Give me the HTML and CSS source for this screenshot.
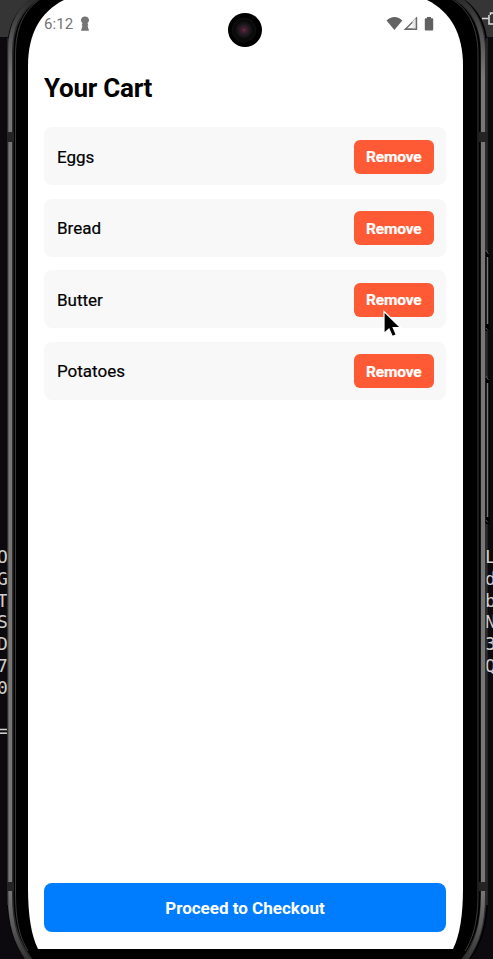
FILE: index.html
```html
<!DOCTYPE html>
<html lang="en">
<head>
<meta charset="utf-8">
<title>Your Cart</title>
<link rel="stylesheet" href="styles.css">
</head>
<body>
<div class="desktop">
  <div class="desktop-bar"></div>
  <pre class="terminal terminal-left">O
G
T
S
D
7
0

=</pre>
  <pre class="terminal terminal-right">L
d
b
N
3
Q</pre>
  <svg class="device" width="493" height="959" viewBox="0 0 493 959" fill="none">
    <defs>
      <linearGradient id="metal" gradientUnits="userSpaceOnUse" x1="0" y1="0" x2="0" y2="959">
        <stop offset="0" stop-color="#2c2c2c"/><stop offset=".04" stop-color="#555"/><stop offset=".08" stop-color="#767776"/>
        <stop offset=".93" stop-color="#767776"/><stop offset=".97" stop-color="#555"/><stop offset="1" stop-color="#333"/>
      </linearGradient>
    </defs>
    <path d="M482 18.500h7M489 15v9h6M490.500 15v-2h4" stroke="#ddd" stroke-width="1.500"/>
    <path d="M30 0C15 11 7 27 7 52V895C7 925 13 944 26 959H470C482 944 488 925 488 895V52C488 27 480 11 465 0Z" fill="#000"/>
    <g stroke="#2b2b2b" stroke-width="6">
      <path d="M36-2C18 10 10.500 28 10.500 52V895C10.500 925 17 944 31 962"/>
      <path d="M457-2C475 10 483.500 28 483.500 52V895C483.500 925 477 944 463 962"/>
    </g>
    <g stroke="url(#metal)" stroke-width="4">
      <path d="M35-2C17 10 10 28 10 52V895C10 925 16 944 30 962"/>
      <path d="M458-2C475 10 483 28 483 52V895C483 925 477 944 464 962"/>
    </g>
    <path d="M8 38V905M487 38V905" stroke="#444"/>
    <g stroke="#3a3a3a">
      <path d="M42-2C23 10 15.500 29 15.500 55V892C15.500 920 19 936 28 951"/>
      <path d="M450-2C470 10 478 29 478 55V892C478 920 474 936 465 951"/>
    </g>
    <path d="M7 132h7v10H7zM479 132h8v10h-8zM7 882h7v9H7zM479 882h8v9h-8z" fill="#242424"/>
    <g stroke="#000" stroke-width="4"><path d="M487.500 252v79M487.500 378v146"/></g>
    <g stroke="#757575" stroke-width="1.500"><path d="M487.500 257v67M487.500 383v134"/></g>
    <path d="M486 250l2.500 4M486 328l2 2.500M486 376l2.500 4M486 520l2 2.500" stroke="#555"/>
    <path d="M64 0C40 12 28 34 28 66V888C28 914 31 935 38 949H453C460 935 463 914 463 888V66C463 34 451 12 427 0Z" fill="#fff"/>
  </svg>
  <main class="screen">
    <header class="status">
      <span class="time">6:12</span>
      <svg class="keyhole" width="10" height="16" viewBox="0 0 10 16"><path d="M5 .500C2.600.500 1 2.100 1 4c0 1.400.700 2.300 1.500 3L1.600 9.500h.900L1 14.800h8L7.500 9.500h.900L7.500 7C8.300 6.300 9 5.400 9 4 9 2.100 7.400.500 5 .500Z" fill="#757575"/></svg>
      <svg class="signals" width="48" height="16" viewBox="0 0 48 16">
        <path d="M.500 4.500C5-.200 12-.200 16.300 4.500L8.400 14Z" fill="#636363"/>
        <path d="M30.400 2.300V13.300H19.300Z" fill="none" stroke="#686868" stroke-width="1.400"/><path d="M26.500 5.500l4-4V14H26.500Z" fill="#e6e6e6"/><path d="M30.400 1.500V13.300H19" fill="none" stroke="#686868" stroke-width="1.400"/>
        <path d="M41 1h4v1.200h1.300q.900 0 .900.900v10.500q0 .900-.900.900h-6.600q-.900 0-.900-.900V3.100q0-.900.900-.900H41Z" fill="#606060"/>
      </svg>
    </header>
    <h1>Your Cart</h1>
    <ul class="items">
      <li class="item"><span>Eggs</span><button class="remove">Remove</button></li>
      <li class="item"><span>Bread</span><button class="remove">Remove</button></li>
      <li class="item"><span>Butter</span><button class="remove">Remove</button></li>
      <li class="item"><span>Potatoes</span><button class="remove">Remove</button></li>
    </ul>
    <button class="checkout">Proceed to Checkout</button>
  </main>
  <div class="camera"></div>
  <svg class="pointer" width="20" height="30" viewBox="0 0 20 30"><path d="M2 1.500V23.500L7 19 10.300 26.500 14.300 24.700 11.200 17.500H18.500Z" fill="#000" stroke="#fff" stroke-width="1.200"/></svg>
</div>
</body>
</html>
```

FILE: styles.css
```css
* { box-sizing: border-box; }
body { margin: 0; font-family: Roboto, sans-serif; color: #000; }
.desktop { position: relative; width: 493px; height: 959px; overflow: hidden; background: #0c0a0e; }
.desktop-bar { height: 37px; background: #353535; }
.terminal { position: absolute; top: 546px; margin: 0; color: #cfcfcf; font: 18px/21.8px "DejaVu Sans Mono", monospace; }
.terminal-left { left: -3px; }
.terminal-right { left: 485px; z-index: 1; clip-path: inset(0 0 0 1.5px); }
.device { position: absolute; inset: 0; }
.screen { position: absolute; top: 0; left: 28px; width: 435px; height: 949px; padding: 0 17px 17px 16px; display: flex; flex-direction: column; }
.status { display: flex; align-items: center; height: 47px; }
.time { width: 36px; font-size: 15px; color: #757575; letter-spacing: .1px; }
.signals { margin-left: auto; margin-right: 12px; }
h1 { margin: 24px 0 0; font-size: 26px; line-height: 34px; font-weight: 700; letter-spacing: -.25px; }
.items { margin: 22px 0 0; padding: 0; list-style: none; display: grid; gap: 13.500px; }
.item { display: flex; align-items: center; justify-content: space-between; height: 58px; padding: 1px 12px 0 13px; border-radius: 8px; background: #f8f8f8; font-size: 17px; -webkit-text-stroke: .2px; }
button { border: 0; padding: 0; font-family: inherit; color: #fff; font-weight: 700; }
.remove { width: 80.500px; height: 34px; border-radius: 6px; background: #ff5a36; font-size: 15.500px; padding-top: 1px; letter-spacing: -.15px; }
.checkout { flex: none; height: 49px; margin-top: auto; border-radius: 8px; background: #007dff; font-size: 17px; }
.camera { position: absolute; left: 228px; top: 13px; width: 34px; height: 34px; border-radius: 50%; background: radial-gradient(circle at 47% 50%, #7a2c48 0, #482034 7%, #271c26 18%, #101010 32%, #080808 36%, #0e0e0e 47%, #000 52%); }
.pointer { position: absolute; left: 382px; top: 310px; }
```
